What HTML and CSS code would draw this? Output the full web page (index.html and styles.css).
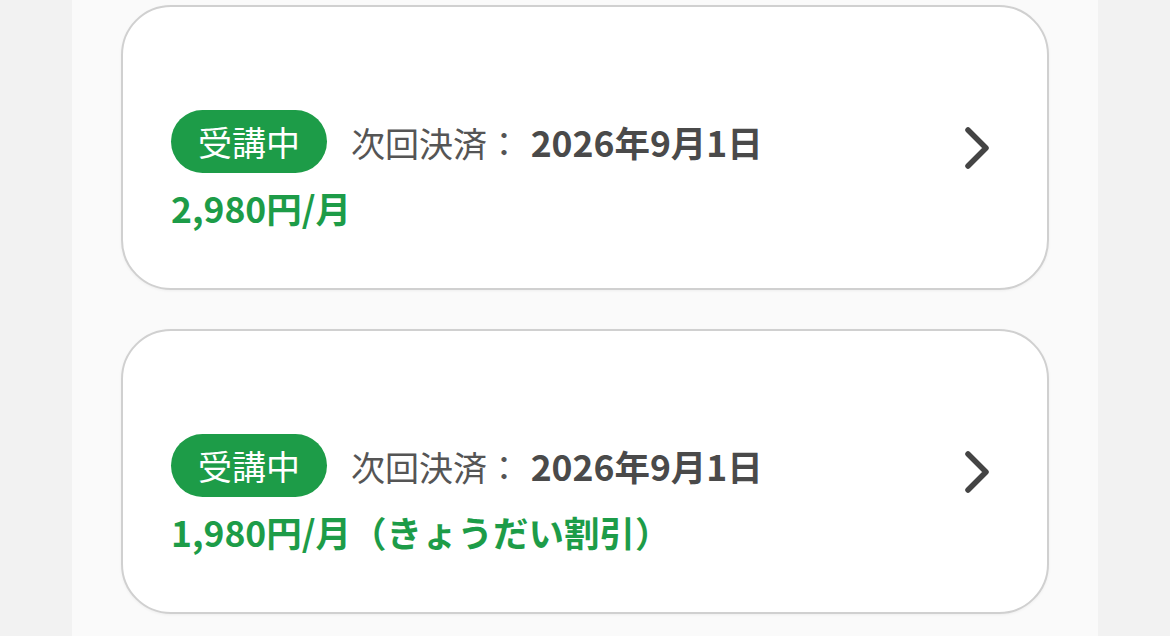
FILE: index.html
```html
<!DOCTYPE html>
<html lang="ja">
<head>
    <meta charset="UTF-8">
    <meta name="viewport" content="width=device-width, initial-scale=1.0">
    <title>受講中のコース</title>
    <link rel="stylesheet" href="styles.css">
</head>
<body>
    <div class="page">
        <a class="course-card" href="#">
            <div class="course-info">
                <div class="status-row">
                    <span class="badge">受講中</span>
                    <span class="next-payment">次回決済： <strong>2026年9月1日</strong></span>
                </div>
                <p class="price">2,980円/月</p>
            </div>
            <svg class="chevron" width="26" height="42" viewBox="0 0 26 42">
                <path d="M4 3 L22 21 L4 39" />
            </svg>
        </a>

        <a class="course-card" href="#">
            <div class="course-info">
                <div class="status-row">
                    <span class="badge">受講中</span>
                    <span class="next-payment">次回決済： <strong>2026年9月1日</strong></span>
                </div>
                <p class="price">1,980円/月（きょうだい割引）</p>
            </div>
            <svg class="chevron" width="26" height="42" viewBox="0 0 26 42">
                <path d="M4 3 L22 21 L4 39" />
            </svg>
        </a>
    </div>
</body>
</html>
```

FILE: styles.css
```css
body {
    margin: 0;
    background-color: #f2f2f2;
    font-family: "Noto Sans CJK JP", "Noto Sans", sans-serif;
}
.page {
    width: 1026px;
    min-height: 100vh;
    margin: 0 auto;
    padding: 5px 49px 23px;
    box-sizing: border-box;
    background-color: #fafafa;
    display: flex;
    flex-direction: column;
    gap: 39px;
}
.course-card {
    display: flex;
    align-items: center;
    justify-content: space-between;
    height: 285px;
    padding: 0 57px 0 48px;
    box-sizing: border-box;
    background-color: #fff;
    border: 2px solid #d0d0d0;
    border-radius: 50px;
    box-shadow: 0 1px 3px rgba(0, 0, 0, 0.05);
    text-decoration: none;
}
.course-info {
    margin-top: 46px;
}
.status-row {
    display: flex;
    align-items: center;
}
.badge {
    display: inline-flex;
    align-items: center;
    height: 63px;
    padding: 0 27px;
    border-radius: 32px;
    background-color: #1d9c48;
    color: #fff;
    font-size: 34px;
}
.next-payment {
    margin-left: 24px;
    font-size: 34px;
    color: #555;
}
.next-payment strong {
    margin-left: 2px;
    font-size: 35.5px;
    color: #4a4a4a;
    font-weight: 700;
}
.price {
    margin: 12px 0 0;
    font-size: 35.5px;
    line-height: 1.3;
    font-weight: 700;
    color: #1d9c48;
}
.chevron path {
    fill: none;
    stroke: #444;
    stroke-width: 5.5;
    stroke-linecap: round;
    stroke-linejoin: round;
}
```
